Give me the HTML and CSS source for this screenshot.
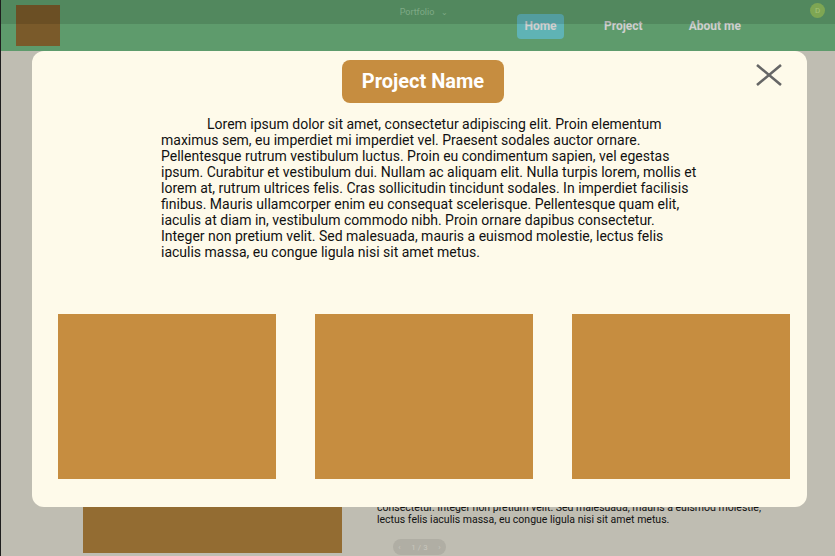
FILE: index.html
```html
<!DOCTYPE html>
<html lang="en">
<head>
<meta charset="utf-8">
<title>Portfolio</title>
<link rel="stylesheet" href="styles.css">
</head>
<body>
<div class="page">
  <header class="nav">
    <div class="logo"></div>
    <nav class="links">
      <a class="link active">Home</a>
      <a class="link">Project</a>
      <a class="link">About me</a>
    </nav>
  </header>
  <div class="toolbar">
    <span class="tb-title">Portfolio<span class="chev">&#8964;</span></span>
    <span class="avatar">D</span>
  </div>
  <main class="content">
    <div class="photo"></div>
    <div class="info">
      <p class="info-text">consectetur. Integer non pretium velit. Sed malesuada, mauris a euismod molestie, lectus felis iaculis massa, eu congue ligula nisi sit amet metus.</p>
      <div class="pager"><span>&#8249;</span><span>1 / 3</span><span>&#8250;</span></div>
    </div>
  </main>
</div>
<div class="overlay">
  <div class="modal">
    <button class="close" aria-label="Close">
      <svg width="26" height="22" viewBox="0 0 26 22"><path d="M1 1 L25 21 M25 1 L1 21" stroke="#666" stroke-width="2.6" fill="none"/></svg>
    </button>
    <div class="title-row"><h1 class="title">Project Name</h1></div>
    <p class="desc">Lorem ipsum dolor sit amet, consectetur adipiscing elit. Proin elementum maximus sem, eu imperdiet mi imperdiet vel. Praesent sodales auctor ornare. Pellentesque rutrum vestibulum luctus. Proin eu condimentum sapien, vel egestas ipsum. Curabitur et vestibulum dui. Nullam ac aliquam elit. Nulla turpis lorem, mollis et lorem at, rutrum ultrices felis. Cras sollicitudin tincidunt sodales. In imperdiet facilisis finibus. Mauris ullamcorper enim eu consequat scelerisque. Pellentesque quam elit, iaculis at diam in, vestibulum commodo nibh. Proin ornare dapibus consectetur. Integer non pretium velit. Sed malesuada, mauris a euismod molestie, lectus felis iaculis massa, eu congue ligula nisi sit amet metus.</p>
    <div class="gallery">
      <div class="shot"></div>
      <div class="shot"></div>
      <div class="shot"></div>
    </div>
  </div>
</div>
</body>
</html>
```

FILE: styles.css
```css
* { box-sizing: border-box; }
html, body { margin: 0; padding: 0; }
body {
  width: 835px;
  height: 556px;
  overflow: hidden;
  font-family: Roboto, "Liberation Sans", sans-serif;
  background: #bfbdb2;
}
.page {
  position: relative;
  height: 556px;
  border-left: 1px solid #1e1e1e;
}
.nav {
  height: 51px;
  background: #5e9b6c;
  display: flex;
  align-items: flex-start;
  padding: 5px 0 0 15px;
}
.logo {
  width: 44px;
  height: 41px;
  background: #7a5a2a;
}
.links {
  display: flex;
  margin: 9px 0 0 457px;
}
.link {
  font-size: 12px;
  font-weight: 700;
  color: #cfcfcf;
  height: 25px;
  line-height: 25px;
  padding: 0 9px;
  border-radius: 4px;
}
.link.active {
  background: #5fb3b5;
  width: 47px;
  padding: 0;
  text-align: center;
  margin-right: 31px;
}
.link:nth-child(2) { margin-right: 28px; }
.toolbar {
  position: absolute;
  left: 0; top: 0; right: 0;
  height: 24px;
  background: rgba(0,0,0,0.12);
  display: flex;
  align-items: center;
  justify-content: center;
}
.tb-title {
  font-size: 9px;
  color: #7faa86;
  margin-left: 12px;
}
.chev { font-size: 8px; margin-left: 7px; }
.avatar {
  position: absolute;
  right: 10px; top: 3px;
  width: 15px; height: 15px;
  border-radius: 50%;
  background: #7ea653;
  color: #a4c27a;
  font-size: 8px;
  text-align: center;
  line-height: 15px;
}
.content {
  display: flex;
  padding: 202px 0 0 82px;
  gap: 35px;
}
.photo {
  width: 259px;
  height: 300px;
  background: #936c32;
  flex: none;
}
.info { width: 392px; }
.info-text {
  margin: 0;
  margin-top: 235px;
  font-size: 10.5px;
  line-height: 12px;
  color: #111;
  height: 38px;
  overflow: hidden;
  display: flex;
  flex-direction: column;
  justify-content: flex-end;
}
.pager {
  margin: 13px 0 0 16px;
  width: 53px;
  height: 16px;
  border-radius: 8px;
  background: #b0aea4;
  color: #c8c6bd;
  font-size: 8px;
  display: flex;
  align-items: center;
  justify-content: space-around;
}
.overlay {
  position: fixed;
  inset: 0;
}
.modal {
  position: absolute;
  left: 32px; top: 51px;
  width: 775px; height: 456px;
  background: #fefaea;
  border-radius: 12px;
}
.close {
  position: absolute;
  right: 25px; top: 13px;
  border: 0; background: none; padding: 0;
  width: 26px; height: 22px;
}
.close svg { display: block; }
.title-row {
  display: flex;
  justify-content: center;
  padding: 9px 0 0 7px;
}
.title {
  margin: 0;
  width: 162px;
  height: 43px;
  background: #c68d40;
  border-radius: 8px;
  color: #fff;
  font-size: 20px;
  font-weight: 700;
  line-height: 43px;
  text-align: center;
}
.desc {
  margin: 13px 0 0 129px;
  width: 536px;
  font-size: 14px;
  line-height: 16px;
  color: #111;
  text-indent: 46px;
}
.gallery {
  display: grid;
  grid-template-columns: repeat(3, 218px);
  column-gap: 39px;
  padding-left: 26px;
  margin-top: 54px;
}
.shot {
  height: 165px;
  background: #c68d40;
}
```
